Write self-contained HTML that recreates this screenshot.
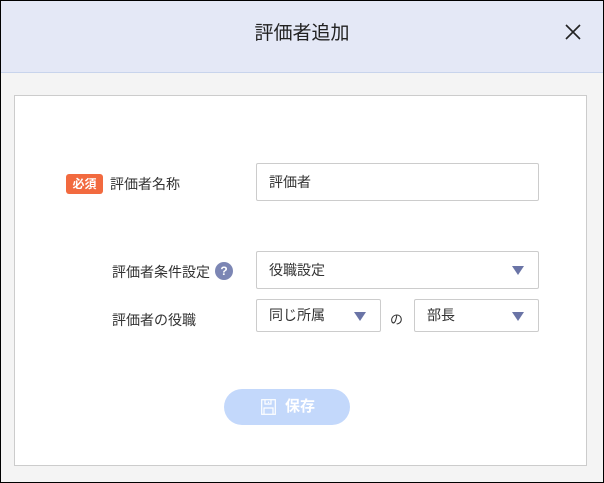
<!DOCTYPE html>
<html><head><meta charset="utf-8"><style>
*{box-sizing:border-box;margin:0;padding:0}
body{width:604px;height:483px;overflow:hidden;font-family:"Liberation Sans","Noto Sans CJK JP",sans-serif;color:#333;background:#000}
.frame{position:absolute;left:1px;top:1px;width:602px;height:481px;background:#f4f4f4}
.hd{position:absolute;left:0;top:0;width:602px;height:72px;background:#e4e8f6;border-bottom:1px solid #c8d4ec}
.ttl{position:absolute;left:0;width:602px;top:20px;text-align:center;font-size:19px;color:#222;line-height:26px}
.panel{position:absolute;left:13px;top:94px;width:573px;height:371px;background:#fff;border:1px solid #ccc}
.lbl{position:absolute;font-size:14px;color:#333;line-height:20px}
.req{position:absolute;left:65px;top:173px;width:37px;height:20px;background:#f26a3f;border-radius:3px;color:#fff;font-size:12px;font-weight:bold;text-align:center;line-height:20px}
.box{position:absolute;border:1px solid #ccc;border-radius:2px;background:#fff;font-size:14px;padding-left:12px;color:#333}
.tri{position:absolute;right:14px;top:50%;margin-top:-4px;width:0;height:0;border-left:6px solid transparent;border-right:6px solid transparent;border-top:9px solid #6a74a6}
.q{position:absolute;left:214px;top:261px;width:18px;height:18px;border-radius:50%;background:#7c86b4;color:#fff;font-size:12px;font-weight:bold;text-align:center;line-height:18px}
.btn{position:absolute;left:223px;top:388px;width:126px;height:36px;border-radius:18px;background:#c3d8fb;color:#fff;font-size:15px;font-weight:bold;line-height:36px}
</style></head><body><div class="frame">
<div class="hd"><div class="ttl">評価者追加</div>
<svg style="position:absolute;left:563px;top:22px" width="18" height="18" viewBox="0 0 18 18"><path d="M2 2L16 16M16 2L2 16" stroke="#222" stroke-width="1.6"/></svg></div>
<div class="panel"></div>
<div class="req">必須</div>
<div class="lbl" style="left:109px;top:173px">評価者名称</div>
<div class="box" style="left:255px;top:162px;width:283px;height:38px;line-height:36px">評価者</div>
<div class="lbl" style="left:111px;top:261px">評価者条件設定</div>
<div class="q">?</div>
<div class="box" style="left:255px;top:250px;width:283px;height:38px;line-height:36px">役職設定<div class="tri"></div></div>
<div class="lbl" style="left:111px;top:309px">評価者の役職</div>
<div class="box" style="left:255px;top:298px;width:125px;height:33px;line-height:31px">同じ所属<div class="tri"></div></div>
<div class="lbl" style="left:389px;top:309px;font-size:13px">の</div>
<div class="box" style="left:413px;top:298px;width:125px;height:33px;line-height:31px">部長<div class="tri"></div></div>
<div class="btn"><svg style="position:absolute;left:37px;top:10px" width="15" height="16" viewBox="0 0 15 16"><rect x="0.7" y="0.7" width="13.6" height="14.6" fill="none" stroke="#fff" stroke-width="1.2"/><path d="M4 1v4h6V1M3 15V9h9v6M7.5 2.5v1.5" fill="none" stroke="#fff" stroke-width="1.2"/></svg><span style="position:absolute;left:61px">保存</span></div>
</div></body></html>
